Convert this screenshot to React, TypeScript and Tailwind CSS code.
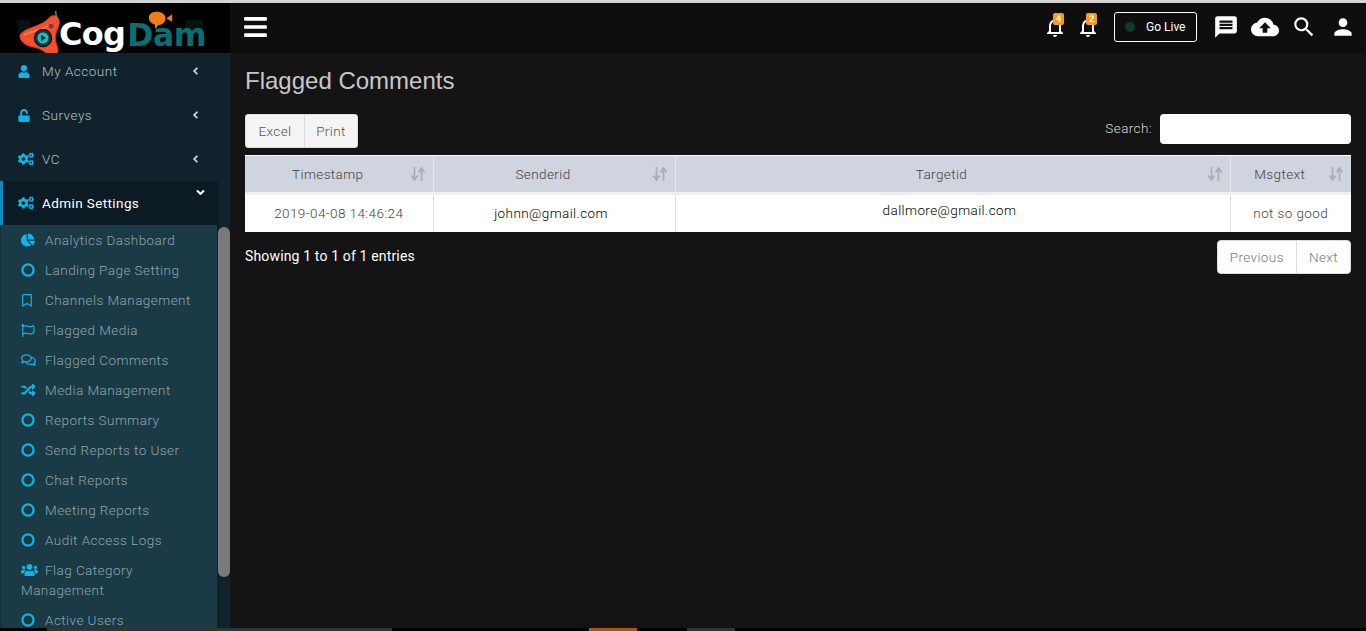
import { FaAngleDown, FaAngleLeft, FaBars, FaChartPie, FaCogs, FaRandom, FaRegBookmark, FaRegComments, FaRegFlag, FaUnlock, FaUser, FaUsers } from 'react-icons/fa';
import { MdCloudUpload, MdMessage, MdNotificationsNone, MdPerson, MdSearch } from 'react-icons/md';

const Ring = () => (
  <svg viewBox="0 0 14 14" className="w-[14px] h-[14px]" fill="none" stroke="currentColor" strokeWidth="2.3">
    <circle cx="7" cy="7" r="5.6" />
  </svg>
);

const topMenu = [
  { label: 'My Account', icon: <FaUser className="w-[12px] h-[13px]" /> },
  { label: 'Surveys', icon: <FaUnlock className="w-[12px] h-[13px]" /> },
  { label: 'VC', icon: <FaCogs className="w-[16px] h-[14px]" /> },
];

const subMenu = [
  { label: 'Analytics Dashboard', icon: <FaChartPie className="w-[14px] h-[14px]" /> },
  { label: 'Landing Page Setting', icon: <Ring /> },
  { label: 'Channels Management', icon: <FaRegBookmark className="w-[12px] h-[13px]" /> },
  { label: 'Flagged Media', icon: <FaRegFlag className="w-[14px] h-[13px]" /> },
  { label: 'Flagged Comments', icon: <FaRegComments className="w-[15px] h-[14px]" /> },
  { label: 'Media Management', icon: <FaRandom className="w-[15px] h-[14px]" /> },
  { label: 'Reports Summary', icon: <Ring /> },
  { label: 'Send Reports to User', icon: <Ring /> },
  { label: 'Chat Reports', icon: <Ring /> },
  { label: 'Meeting Reports', icon: <Ring /> },
  { label: 'Audit Access Logs', icon: <Ring /> },
];

const SortIcon = () => (
  <svg viewBox="0 0 16 14" className="w-[16px] h-[14px] text-[#a8adb6]" fill="none" stroke="currentColor" strokeWidth="1.7">
    <path d="M4.5 0v11M1.5 8.5l3 4.5 3-4.5" />
    <path d="M11.5 14V3M8.5 5.5l3-4.5 3 4.5" />
  </svg>
);

const Bell = ({ count }: { count: number }) => (
  <div className="relative w-[22px] h-[24px] text-white">
    <MdNotificationsNone className="w-[24px] h-[24px] -ml-[1px]" />
    <span className="absolute -top-[2px] left-[9px] w-[11px] h-[12px] rounded-[2px] bg-[#f59a23] text-[9px] leading-[12px] font-bold text-center">{count}</span>
  </div>
);

const Logo = () => (
  <div className="h-[50px] bg-black flex items-start relative shrink-0 overflow-hidden">
    {/* faint shapes left behind the logo */}
    <div className="absolute left-[18px] top-[17px] w-[12px] h-[13px] bg-[#051318]" />
    <div className="absolute left-[185px] top-[17px] w-[18px] h-[13px] bg-[#05140d]" />
    <svg viewBox="0 0 42 46" className="absolute left-[20px] top-[5px] w-[42px] h-[46px]" overflow="visible">
      <path d="M0 27C5 19 22 19 30 9c5-4 11 1 9 8-2 6-5 10-3 18 3 7 3 12-3 12-7 0-11-7-20-8C6 38-1 33 0 27Z" fill="#f4502a" stroke="#d8321f" strokeWidth="1" />
      <path d="M4 27C10 23 24 23 32 15" stroke="#ff8a5a" strokeWidth="1.5" fill="none" />
      <circle cx="23" cy="30" r="8.5" fill="#0b3f48" stroke="#241010" strokeWidth="1.5" />
      <circle cx="23" cy="30" r="5.5" fill="#2bb8b8" />
      <path d="M21 26.8v6.4l5-3.2z" fill="#063038" />
      <path d="M36 3c-2 4 3 6 1 11" stroke="#9a6a98" strokeWidth="1.5" fill="none" />
      <circle cx="31" cy="18" r="2.5" fill="#7a3560" />
    </svg>
    <span className="relative ml-[59px] mt-[15px] font-['DejaVu_Sans',sans-serif] font-bold text-[32px] leading-none tracking-[-0.7px] text-white">Cog</span>
    <span className="relative ml-[2px] mt-[17px] font-['DejaVu_Sans',sans-serif] font-bold text-[31.5px] leading-none tracking-[-0.5px] text-[#0a6f73]">Dam</span>
    <svg viewBox="0 0 30 24" className="absolute left-[146px] top-[8px] w-[29px] h-[20px]">
      <path d="M1 8C1 3 6 1 11 1s10 3 10 8-5 8-9 8l-3 5-1-6C4 15 1 12 1 8Z" fill="#f07d1e" />
      <path d="M22 9l7-5v9z" fill="#f07d1e" />
    </svg>
  </div>
);

export default function App() {
  return (
    <div className="h-[631px] w-[1366px] overflow-hidden flex flex-col bg-black font-['Roboto',sans-serif]">
      <div className="h-[3px] bg-[#d4d4d4] shrink-0" />

      <div className="flex flex-1 min-h-0">
        {/* SIDEBAR */}
        <aside className="w-[230px] shrink-0 flex flex-col bg-[#10222c]">
          <Logo />
          <div className="flex flex-1 min-h-0">
            <nav className="w-[218px] overflow-hidden">
              <div className="-mt-[4px]">
                {topMenu.map(item => (
                  <div key={item.label} className="h-[44px] flex items-center pl-[18px] pr-[18px] text-[13.5px] tracking-[0.5px] font-light text-[#b4c0c6]">
                    <span className="w-[24px] text-[#0fb3e6] flex">{item.icon}</span>
                    <span className="flex-1">{item.label}</span>
                    <FaAngleLeft className="w-[9px] h-[12px] text-[#c0cbd0]" />
                  </div>
                ))}
                <div className="h-[44px] flex items-center pl-[15px] pr-[30px] text-[13.5px] tracking-[0.4px] text-white bg-[#0c1b23] border-l-[3px] border-[#0a8cc0] relative">
                  <span className="w-[24px] text-[#0fb3e6] flex"><FaCogs className="w-[16px] h-[14px]" /></span>
                  <span className="flex-1">Admin Settings</span>
                  <FaAngleDown className="absolute right-[11px] top-[5px] w-[13px] h-[13px] text-white" />
                </div>
                <div className="bg-[#1a3a46] border-l border-[#10303a] w-[217px] text-[13.5px] font-light tracking-[0.45px] text-[#8ea6ae]">
                  {subMenu.map(item => (
                    <div key={item.label} className="h-[30px] flex items-center pl-[20px]">
                      <span className="w-[24px] text-[#0fb3e6] flex">{item.icon}</span>
                      <span>{item.label}</span>
                    </div>
                  ))}
                  <div className="h-[50px] pl-[20px] pt-[5px] leading-[20px]">
                    <FaUsers className="inline w-[17px] h-[16px] text-[#0fb3e6] mr-[7px] align-[-3px]" />
                    Flag Category<br />Management
                  </div>
                  <div className="h-[30px] flex items-center pl-[20px]">
                    <span className="w-[24px] text-[#0fb3e6] flex"><Ring /></span>
                    <span>Active Users</span>
                  </div>
                </div>
              </div>
            </nav>
            <div className="w-[12px] pt-[2px]">
              <div className="h-[350px] mt-[172px] bg-[#7a7a7a] rounded-[6px]" />
            </div>
          </div>
        </aside>

        <div className="flex-1 min-w-0 flex flex-col bg-[#141414]">
          {/* TOP BAR */}
          <header className="h-[50px] shrink-0 bg-[#0e0e0e] flex items-center pl-[14px] pr-[10px] pb-[2px]">
            <FaBars className="w-[23px] h-[26px] text-white" />
            <div className="ml-auto flex items-center">
              <Bell count={4} />
              <div className="ml-[11px]"><Bell count={2} /></div>
              <div className="ml-[15px] w-[83px] h-[30px] border border-white rounded-[3px] flex items-center pl-[10px] text-[12px] text-white">
                <span className="w-[10px] h-[10px] rounded-full bg-[#0e3d24] mr-[11px]" />
                Go Live
              </div>
              <MdMessage className="ml-[16px] w-[26px] h-[26px] text-white" />
              <MdCloudUpload className="ml-[12px] w-[28px] h-[28px] text-white" />
              <MdSearch className="ml-[12px] w-[26px] h-[26px] text-white" />
              <MdPerson className="ml-[13px] w-[26px] h-[26px] text-white" />
            </div>
          </header>

          {/* CONTENT */}
          <main className="px-[15px] pt-[13px]">
            <h1 className="font-['Liberation_Sans',sans-serif] text-[24px] leading-[30px] text-[#c8c8c8]">Flagged Comments</h1>

            <div className="mt-[18px] flex justify-between items-start">
              <div className="flex h-[34px] bg-[#f4f4f4] border border-[#dddddd] rounded-[3px] text-[13.5px] font-light tracking-[0.4px] text-[#555] leading-[32px] text-center">
                <span className="w-[59px] border-r border-[#dddddd]">Excel</span>
                <span className="w-[52px]">Print</span>
              </div>
              <div className="flex items-center text-[13.5px] font-light tracking-[0.4px] text-[#d8d8d8]">
                <span className="mb-[2px]">Search:</span>
                <div className="ml-[8px] w-[191px] h-[30px] bg-white rounded-[4px]" />
              </div>
            </div>

            <table className="mt-[7px] w-[1106px] table-fixed border-collapse bg-white text-[13.5px] font-light tracking-[0.4px]">
              <colgroup>
                <col className="w-[188px]" />
                <col className="w-[242px]" />
                <col className="w-[555px]" />
                <col className="w-[121px]" />
              </colgroup>
              <thead>
                <tr className="h-[38px] bg-[#cfd4de] text-[#444] border-t border-white border-b-[3px] border-b-[#eeeeee]">
                  {['Timestamp', 'Senderid', 'Targetid', 'Msgtext'].map((h, i) => (
                    <th key={h} className={`font-light relative pr-[22px] ${i > 0 ? 'border-l border-[#e4e7ec]' : ''}`}>
                      {h}
                      <span className="absolute right-[7px] top-[11px]"><SortIcon /></span>
                    </th>
                  ))}
                </tr>
              </thead>
              <tbody>
                <tr className="h-[38px] text-center">
                  <td className="text-[#444]">2019-04-08 14:46:24</td>
                  <td className="border-l border-[#dddddd] text-black pr-[6px]">johnn@gmail.com</td>
                  <td className="border-l border-[#dddddd] text-black align-top pt-[5px] pr-[6px]">dallmore@gmail.com</td>
                  <td className="border-l border-[#dddddd] text-[#444]">not so good</td>
                </tr>
              </tbody>
            </table>

            <div className="mt-[8px] flex justify-between items-start">
              <span className="mt-[6px] text-[14px] tracking-[0.15px] text-white">Showing 1 to 1 of 1 entries</span>
              <div className="flex h-[34px] bg-white border border-[#dddddd] rounded-[4px] text-[13.5px] font-light tracking-[0.4px] text-[#777] leading-[32px]">
                <span className="px-[12px] border-r border-[#dddddd]">Previous</span>
                <span className="px-[12px]">Next</span>
              </div>
            </div>
          </main>
        </div>
      </div>

      {/* browser strip along the bottom */}
      <div className="h-[3px] shrink-0 bg-black flex">
        <div className="ml-[47px] w-[345px] bg-[#333333]" />
        <div className="ml-[197px] w-[48px] bg-[#a5571f]" />
        <div className="ml-[50px] w-[48px] bg-[#333333]" />
      </div>
    </div>
  );
}
